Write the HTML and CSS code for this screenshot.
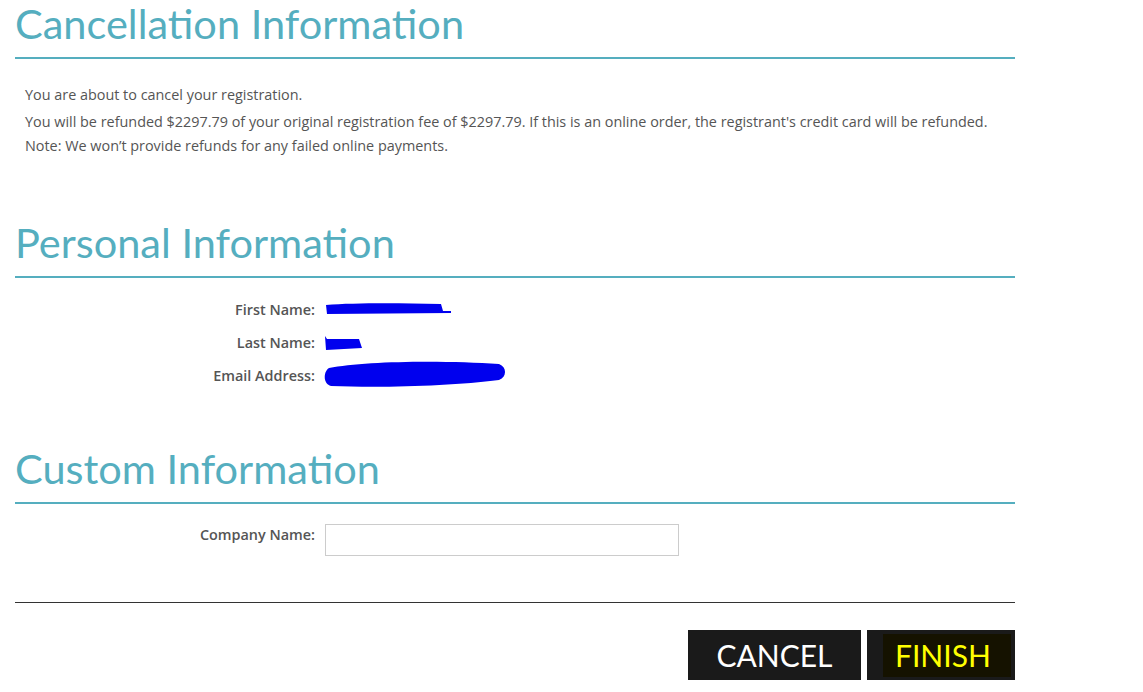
FILE: index.html
```html
<!DOCTYPE html>
<html>
<head>
<meta charset="utf-8">
<link rel="stylesheet" href="styles.css">
</head>
<body>
<div class="page">
  <section class="sec sec-cancel">
    <h2 class="title">Cancellation Information</h2>
    <div class="msg">
      <p class="m1">You are about to cancel your registration.</p>
      <p class="m2">You will be refunded $2297.79 of your original registration fee of $2297.79. If this is an online order, the registrant's credit card will be refunded.</p>
      <p class="m3">Note: We won’t provide refunds for any failed online payments.</p>
    </div>
  </section>

  <section class="sec sec-personal">
    <h2 class="title">Personal Information</h2>
    <div class="rows">
      <div class="row"><span class="lbl">First Name:</span><span class="val"><svg width="132" height="16" viewBox="0 0 132 16"><path d="M3 3 C30 1 70 1 118 2 L120 9 L128 9 L128 11 L4 12 Z" fill="#0000ee"/></svg></span></div>
      <div class="row"><span class="lbl">Last Name:</span><span class="val"><svg width="44" height="18" viewBox="0 0 44 18"><path d="M2 2 L4 5 L36 5 L39 14 L3 16 Z" fill="#0000ee"/></svg></span></div>
      <div class="row"><span class="lbl">Email Address:</span><span class="val"><svg width="184" height="32" viewBox="0 0 184 32"><path d="M6 8 C40 1 120 0 176 4 C184 7 184 17 176 20 C130 26 60 28 8 26 C0 24 0 12 6 8 Z" fill="#0000ee"/></svg></span></div>
    </div>
  </section>

  <section class="sec sec-custom">
    <h2 class="title">Custom Information</h2>
    <div class="rows">
      <div class="row row-input"><span class="lbl">Company Name:</span><input class="inp" type="text"></div>
    </div>
  </section>

  <hr class="sep">
  <div class="actions">
    <button class="btn btn-cancel">CANCEL</button>
    <button class="btn btn-finish"><span class="hl">FINISH</span></button>
  </div>
</div>
</body>
</html>
```
FILE: styles.css
```css
html, body { margin: 0; padding: 0; background: #fff; }
body { font-family: "Open Sans", "Liberation Sans", sans-serif; color: #555; }
.page { width: 1000px; padding-left: 15px; }
.title {
  margin: 0;
  font-family: "Lato", "Liberation Sans", sans-serif;
  font-weight: 400;
  font-size: 41.5px;
  line-height: 46px;
  color: #55aebf;
  padding-bottom: 11px;
  border-bottom: 2px solid #55aebf;
}
.msg { padding: 27px 0 0 10px; font-size: 14.4px; }
.msg p { margin: 0; line-height: 18px; }
.msg .m2 { margin-top: 9px; }
.msg .m3 { margin-top: 6px; }
.sec-personal { margin-top: 64px; }
.sec-custom { margin-top: 53px; }
.sec-personal .rows { padding-top: 15px; }
.sec-custom .rows { padding-top: 17px; }
.row { display: flex; align-items: center; height: 33px; }
.lbl { width: 300px; text-align: right; font-size: 14.4px; font-weight: 600; color: #555; line-height: 20px; }
.val { margin-left: 8px; display: flex; align-items: center; }
.row-input { height: 34px; margin-top: 2px; align-items: flex-start; }
.row-input .lbl { padding-top: 2px; }
.row-input .inp { margin-top: 1px; }
.inp { margin-left: 10px; width: 354px; height: 32px; box-sizing: border-box; border: 1px solid #ccc; padding: 0 6px; font-family: inherit; }
.sep { margin: 45px 0 0 0; border: 0; border-top: 1px solid #333; }
.actions { display: flex; justify-content: flex-end; gap: 6px; margin-top: 27px; }
.btn {
  height: 50px; border: 0; background: #1a1a1a; color: #fff;
  font-family: "Lato", "Liberation Sans", sans-serif; font-size: 30px; font-weight: 400;
  padding: 0; cursor: pointer;
}
.btn-cancel { width: 173px; }
.btn-finish { width: 148px; color: #ffff00; text-align: left; padding-left: 16px; overflow: hidden; white-space: nowrap; }
.hl { background: #151200; padding: 3px 20px 4px 12px; }
```
